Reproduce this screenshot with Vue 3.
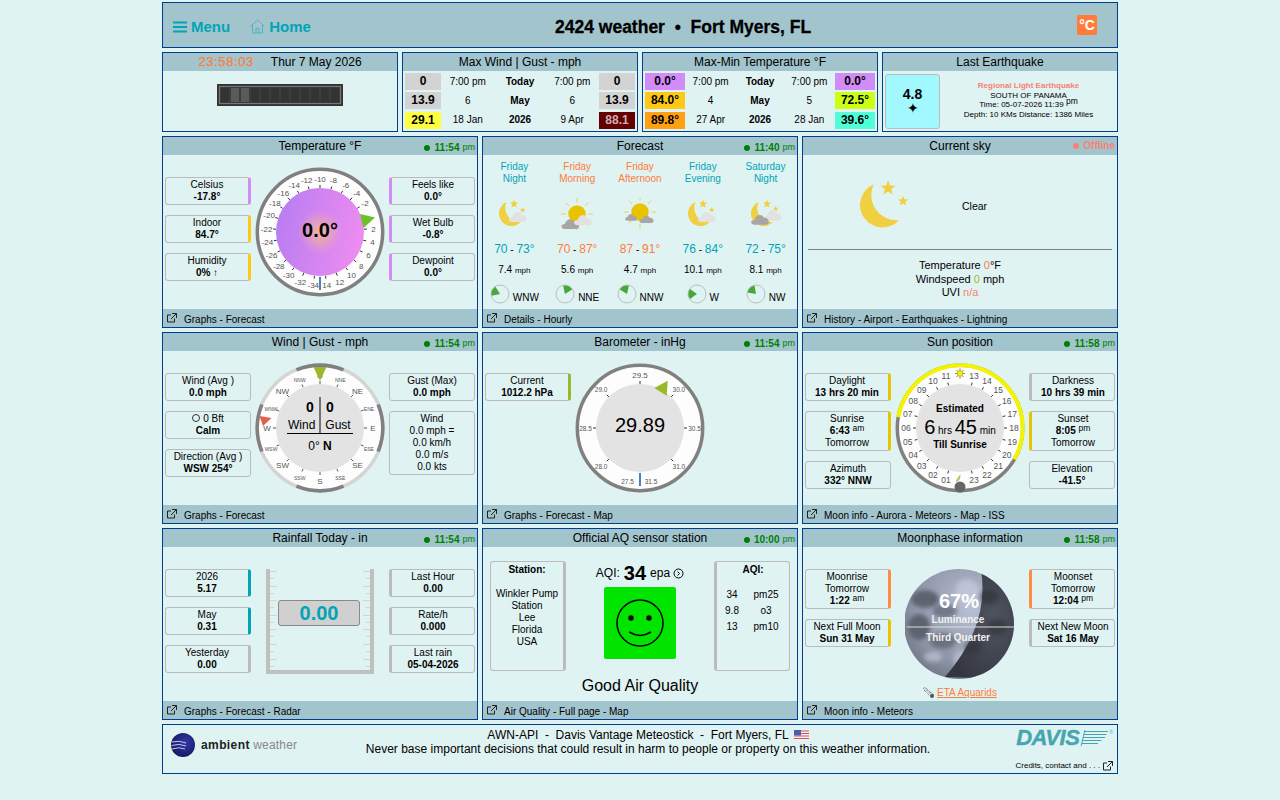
<template>
  <div class="page">
    <header class="top">
      <nav class="nav">
        <a class="nav-link">
          <svg width="14" height="12" viewBox="0 0 14 12"><path d="M0 1.5h14M0 6h14M0 10.5h14" stroke="#00a5b5" stroke-width="2" /></svg>
          Menu
        </a>
        <a class="nav-link home">
          <svg width="15" height="15" viewBox="0 0 15 15" fill="none" stroke="#4fb4c4" stroke-width="1"><path d="M.5 7.5 7.5 1l7 6.5M2.5 6v8h10V6M6 14V9.5h3V14" /></svg>
          Home
        </a>
      </nav>
      <h1 class="site-title">2424 weather &nbsp;•&nbsp; Fort Myers, FL</h1>
      <span class="unit-btn">°C</span>
    </header>

    <div class="row-small">
      <section class="card small">
        <div class="card-title"><span class="clock">23:58:03</span><span class="date">Thur 7 May 2026</span></div>
        <div class="led-wrap">
          <div class="led">
            <i v-for="i in 12" :key="i" :class="{ lit: i === 2 || i === 3 }"></i>
          </div>
        </div>
      </section>

      <section v-for="t in tables" :key="t.title" class="card small">
        <div class="card-title">{{ t.title }}</div>
        <div class="mini-table" :class="t.cls">
          <template v-for="r in t.rows" :key="r[2]">
            <b class="val" :class="r[5]">{{ r[0] }}</b>
            <span>{{ r[1] }}</span>
            <b class="mid">{{ r[2] }}</b>
            <span>{{ r[3] }}</span>
            <b class="val" :class="r[6]">{{ r[4] }}</b>
          </template>
        </div>
      </section>

      <section class="card small">
        <div class="card-title">Last Earthquake</div>
        <div class="quake">
          <div class="mag"><b>4.8</b><span>✦</span></div>
          <div class="quake-text">
            <b class="salmon">Regional Light Earthquake</b><br />
            SOUTH OF PANAMA<br />
            Time: 05-07-2026 11:39 <span class="up">pm</span><br />
            Depth: 10 KMs Distance: 1386 Miles
          </div>
        </div>
      </section>
    </div>

    <div class="row-main">
      <section v-for="c in cards" :key="c.title" class="card">
        <div class="card-title">
          {{ c.title }}
          <span v-if="c.stamp" class="stamp"><i class="dot"></i><b>{{ c.stamp }}</b> <small>pm</small></span>
          <span v-else class="stamp offline"><i class="dot"></i><b>Offline</b></span>
        </div>

        <!-- cards with info boxes down both sides -->
        <div v-if="c.left" class="card-body sides">
          <div class="col">
            <div v-for="(b, i) in c.left" :key="i" class="box on-right" :class="b.tone">
              <div v-for="(l, j) in b.lines" :key="j" :class="{ strong: l.b }">
                <i v-if="l.ring" class="ring"></i>{{ l.t }} <span v-if="l.sup" class="up">{{ l.sup }}</span>
              </div>
            </div>
          </div>

          <div class="center">
            <svg v-if="c.kind === 'temp'" class="gauge" width="130" height="130" viewBox="0 0 130 130">
              <defs>
                <linearGradient id="tempFill" x1="0" x2="1" y1="0.2" y2="0.4">
                  <stop offset="0" stop-color="#b77cf2" />
                  <stop offset="1" stop-color="#ec8cf0" />
                </linearGradient>
                <radialGradient id="tempGlow">
                  <stop offset="0" stop-color="#f5b890" stop-opacity="0.9" />
                  <stop offset="1" stop-color="#f5b890" stop-opacity="0" />
                </radialGradient>
              </defs>
              <circle cx="65" cy="65" r="62.7" fill="#fdfdfd" stroke="#808080" stroke-width="3.5" />
              <line v-for="t in tempMarks" :key="'k' + t.label" :x1="t.a.x" :y1="t.a.y" :x2="t.b.x" :y2="t.b.y" stroke="#333" />
              <text v-for="t in tempMarks" :key="t.label" :x="t.p.x" :y="t.p.y + 3" class="tick">{{ t.label }}</text>
              <circle cx="65" cy="65" r="44" fill="url(#tempFill)" />
              <circle cx="65" cy="65" r="22" fill="url(#tempGlow)" />
              <line x1="65" y1="110" x2="65" y2="123" stroke="#0d5aa0" stroke-width="1.5" />
              <polygon points="105,47 120,50.5 108.5,61" fill="#6cc028" />
              <text x="65" y="70" class="big bold">0.0°</text>
            </svg>

            <svg v-else-if="c.kind === 'wind'" class="gauge" width="130" height="130" viewBox="0 0 130 130">
              <circle cx="65" cy="65" r="62.7" fill="#fdfdfd" stroke="#d4d4d4" stroke-width="3.5" />
              <path v-for="a in [0, 90, 180, 270]" :key="a" :d="arc(a - 22, a + 22, 62.7)" fill="none" stroke="#808080" stroke-width="3.5" />
              <line v-for="d in compass" :key="'k' + d.label" :x1="d.a.x" :y1="d.a.y" :x2="d.b.x" :y2="d.b.y" stroke="#555" />
              <text v-for="d in compass" :key="d.label" :x="d.p.x" :y="d.p.y" class="tick" :class="{ tiny: d.minor }">{{ d.label }}</text>
              <circle cx="65" cy="65" r="44" fill="#e3e3e3" />
              <polygon points="58.5,4 71.5,4 65,18" fill="#9ab82a" />
              <polygon points="4.5,53 16.5,55 8,63" fill="#e2604c" />
              <text x="55" y="48.5" class="bold mid-num">0</text>
              <text x="75" y="48.5" class="bold mid-num">0</text>
              <text x="46.7" y="66.3" class="mid-text">Wind</text>
              <text x="83" y="66.3" class="mid-text">Gust</text>
              <line x1="65" y1="34" x2="65" y2="70.5" stroke="#000" />
              <line x1="32" y1="70.5" x2="98" y2="70.5" stroke="#000" />
              <text x="65" y="87" class="mid-text">0° <tspan class="bold">N</tspan></text>
            </svg>

            <svg v-else-if="c.kind === 'baro'" class="gauge" width="130" height="130" viewBox="0 0 130 130">
              <circle cx="65" cy="65" r="62.7" fill="#fdfdfd" stroke="#808080" stroke-width="3.5" />
              <line v-for="b in baroMarks" :key="'k' + b.label" :x1="b.a.x" :y1="b.a.y" :x2="b.b.x" :y2="b.b.y" stroke="#333" />
              <text v-for="b in baroMarks" :key="b.label" :x="b.p.x" :y="b.p.y" class="tick" :class="{ small6: !b.top }">{{ b.label }}</text>
              <circle cx="65" cy="65" r="44" fill="#e3e3e3" />
              <line x1="65" y1="110" x2="65" y2="123" stroke="#0d5aa0" stroke-width="1.5" />
              <text x="52.5" y="121" class="tick small6">27.5</text>
              <text x="76" y="121" class="tick small6">31.5</text>
              <polygon points="92.7,17.7 79.3,25 91.7,32.7" fill="#9ab82a" />
              <text x="65" y="69" class="big">29.89</text>
            </svg>

            <svg v-else-if="c.kind === 'sun'" class="gauge" width="130" height="130" viewBox="0 0 130 130">
              <circle cx="65" cy="65" r="62.7" fill="#fdfdfd" stroke="#808080" stroke-width="3.5" />
              <path :d="arc(-80, 120, 62.7)" fill="none" stroke="#f4f400" stroke-width="4" />
              <line v-for="h in hours" :key="'k' + h.label" :x1="h.a.x" :y1="h.a.y" :x2="h.b.x" :y2="h.b.y" stroke="#333" />
              <text v-for="h in hours" :key="h.label" :x="h.p.x" :y="h.p.y" class="tick sun-tick">{{ h.label }}</text>
              <circle cx="65" cy="65" r="44" fill="#e3e3e3" />
              <g stroke="#6b6b10" stroke-width="0.8">
                <path d="M65 5.5v10M60 10.5h10M61.5 7l7 7M68.5 7l-7 7" />
              </g>
              <circle cx="65" cy="10.5" r="2.8" fill="#f2f200" stroke="#a0a000" stroke-width="0.5" />
              <path d="M65 112.5c-2 2-3 4-3.5 6 2.5-1 3.5-3 3.5-6z" fill="#e8dc20" stroke="#666" stroke-width="0.4" />
              <circle cx="65" cy="124" r="5.5" fill="#666" />
              <text x="65" y="48.7" class="bold small10">Estimated</text>
              <text x="65" y="71" class="mid-text"><tspan class="big-inline">6</tspan><tspan class="small10"> hrs </tspan><tspan class="big-inline">45</tspan><tspan class="small10"> min</tspan></text>
              <text x="65" y="85" class="bold small10">Till Sunrise</text>
            </svg>

            <div v-else-if="c.kind === 'rain'" class="tube">
              <div class="rain-val">0.00</div>
            </div>

            <template v-else-if="c.kind === 'moon'">
              <svg width="110" height="110" viewBox="0 0 110 110">
                <defs>
                  <clipPath id="moonClip"><circle cx="54" cy="55" r="55" /></clipPath>
                  <radialGradient id="litFill" cx="0.6" cy="0.35" r="0.75">
                    <stop offset="0" stop-color="#b9c1d4" />
                    <stop offset="0.7" stop-color="#8d94a6" />
                    <stop offset="1" stop-color="#6b7180" />
                  </radialGradient>
                  <radialGradient id="darkFill" cx="0.7" cy="0.45" r="0.7">
                    <stop offset="0" stop-color="#50545f" />
                    <stop offset="1" stop-color="#33363f" />
                  </radialGradient>
                  <filter id="soft"><feGaussianBlur stdDeviation="2.2" /></filter>
                </defs>
                <g clip-path="url(#moonClip)">
                  <rect width="110" height="110" fill="url(#litFill)" />
                  <g filter="url(#soft)" fill="#5d636f">
                    <ellipse cx="20" cy="30" rx="14" ry="9" />
                    <ellipse cx="14" cy="58" rx="11" ry="13" />
                    <ellipse cx="40" cy="42" rx="12" ry="7" opacity="0.7" />
                    <ellipse cx="38" cy="72" rx="13" ry="8" opacity="0.75" />
                    <ellipse cx="28" cy="88" rx="9" ry="5" fill="#c9cfdd" opacity="0.6" />
                    <ellipse cx="62" cy="22" rx="12" ry="12" fill="#d4d9e6" opacity="0.45" />
                    <ellipse cx="58" cy="90" rx="10" ry="9" fill="#c4cada" opacity="0.6" />
                  </g>
                  <path d="M76 1Q85 56 40 108L110 110V0Z" fill="url(#darkFill)" />
                  <g filter="url(#soft)" fill="#2d3038" opacity="0.6">
                    <ellipse cx="84" cy="28" rx="9" ry="7" />
                    <ellipse cx="92" cy="58" rx="10" ry="8" />
                    <ellipse cx="68" cy="78" rx="8" ry="6" />
                  </g>
                </g>
                <text x="54" y="39" class="moon-pct">67%</text>
                <text x="53" y="53.5" class="moon-label">Luminance</text>
                <line x1="1.7" y1="58" x2="108.7" y2="58" stroke="#ddd" stroke-width="1.2" />
                <text x="53" y="72" class="moon-label">Third Quarter</text>
              </svg>
              <div class="meteor">
                <svg width="12" height="12" viewBox="0 0 12 12" fill="none" stroke="#777" stroke-dasharray="1 1">
                  <path d="M0 1 10 9M1 0l10 8M1 3l7 7M3 1l7 7" />
                  <circle cx="9" cy="9" r="2" fill="#555" stroke="none" />
                </svg>
                <a>ETA Aquarids</a>
              </div>
            </template>
          </div>

          <div class="col">
            <div v-for="(b, i) in c.right" :key="i" class="box on-left" :class="b.tone">
              <div v-for="(l, j) in b.lines" :key="j" :class="{ strong: l.b }">
                {{ l.t }} <span v-if="l.sup" class="up">{{ l.sup }}</span>
              </div>
            </div>
          </div>
        </div>

        <!-- forecast -->
        <div v-else-if="c.kind === 'forecast'" class="card-body forecast">
          <div v-for="f in forecast" :key="f.name + f.part" class="fc">
            <div class="fc-name" :class="f.warm ? 'orange' : 'teal'">{{ f.name }}<br />{{ f.part }}</div>
            <svg class="fc-icon" width="40" height="33" viewBox="0 0 40 33">
              <g v-if="f.icon === 'moon' || f.icon === 'moonClouds'">
                <path :d="crescent" fill="#f0d040" />
                <polygon :points="star(f.icon === 'moon' ? 20 : 21, 6, 4.5)" fill="#f0d040" />
                <polygon :points="star(f.icon === 'moon' ? 28.7 : 29.7, f.icon === 'moon' ? 12 : 10.7, 3)" fill="#f0d040" />
                <path v-if="f.icon === 'moon'" :d="cloud" :transform="place(14.7, 12.7, 18.3, 11.3)" fill="#e2e2e2" />
                <template v-else>
                  <path :d="cloud" :transform="place(17.7, 10.7, 18.3, 12)" fill="#e2e2e2" />
                  <path :d="cloud" :transform="place(5, 15.7, 18.3, 11)" fill="#aaa5a5" />
                </template>
              </g>
              <g v-else-if="f.icon === 'sunCloud'">
                <path :d="rays(20, 16)" stroke="#f0d040" stroke-width="1" />
                <circle cx="20" cy="16" r="8.7" fill="#e8c400" />
                <path :d="cloud" :transform="place(4.3, 20, 18.4, 11)" fill="#aaa5a5" />
                <path :d="cloud" :transform="place(17, 15.7, 18.3, 11.6)" fill="#e2e2e2" />
              </g>
              <g v-else>
                <path :d="rays(20, 14)" stroke="#f0d040" stroke-width="1" />
                <circle cx="20" cy="14" r="8.7" fill="#e8c400" />
                <path :d="cloud" :transform="place(5, 15, 12.3, 7.7)" fill="#aaa5a5" />
                <path :d="cloud" :transform="place(19.3, 16.7, 14.7, 8.3)" fill="#aaa5a5" />
              </g>
            </svg>
            <div class="fc-temp" :class="f.warm ? 'orange' : 'teal'">
              <span>{{ f.lo }}</span><small> - </small><span>{{ f.hi }}°</span>
            </div>
            <div class="fc-speed">{{ f.speed }} <small>mph</small></div>
            <div class="fc-dir">
              <svg width="20" height="20" viewBox="0 0 20 20">
                <circle cx="10" cy="10" r="9" fill="none" stroke="#bdbdbd" />
                <path :d="wedge(f.deg)" fill="#45a838" />
              </svg>
              <span>{{ f.dir }}</span>
            </div>
          </div>
        </div>

        <!-- current sky -->
        <div v-else-if="c.kind === 'sky'" class="card-body sky">
          <div class="sky-top">
            <svg class="sky-icon" width="54" height="50.4" viewBox="0 0 30 28">
              <path :d="crescent" fill="#f0d040" transform="translate(-5 0)" />
              <polygon :points="star(15.6, 6.2, 4.4)" fill="#f0d040" />
              <polygon :points="star(23.9, 13.4, 3)" fill="#f0d040" />
            </svg>
            <span>Clear</span>
          </div>
          <div class="sky-text">
            Temperature <span class="orange">0</span>°F<br />
            Windspeed <span class="olive">0</span> mph<br />
            UVI <span class="salmon">n/a</span>
          </div>
        </div>

        <!-- air quality -->
        <div v-else class="card-body aq">
          <div class="aq-box accent-r">
            <b>Station:</b>
            <p>Winkler Pump<br />Station<br />Lee<br />Florida<br />USA</p>
          </div>
          <div class="aq-mid">
            <div class="aq-head">
              AQI: <b>34</b> epa
              <svg width="11" height="11" viewBox="0 0 11 11" fill="none" stroke="#000"><circle cx="5.5" cy="5.5" r="4.5" /><path d="M4.5 3.5 6.5 5.5 4.5 7.5" /></svg>
            </div>
            <div class="aq-face">
              <svg width="72" height="72" viewBox="0 0 72 72" fill="none" stroke="#000" stroke-width="1.5">
                <circle cx="36" cy="36" r="23" />
                <circle cx="27" cy="31" r="2.7" fill="#000" stroke="none" />
                <circle cx="45" cy="31" r="2.7" fill="#000" stroke="none" />
                <path d="M25.3 45Q36 52 47 45" />
              </svg>
            </div>
            <div class="aq-label">Good Air Quality</div>
          </div>
          <div class="aq-box accent-l">
            <b>AQI:</b>
            <div class="aq-grid">
              <template v-for="p in pollutants" :key="p[1]">
                <span>{{ p[0] }}</span><span>{{ p[1] }}</span>
              </template>
            </div>
          </div>
        </div>

        <div class="card-foot">
          <svg width="10" height="10" viewBox="0 0 10 10" fill="none" stroke="#222"><path d="M7.5 5.5V9h-7V2H4M5 .5h4.5V5M9.5 .5 4 6" /></svg>
          <span>{{ c.links }}</span>
        </div>
      </section>
    </div>

    <footer class="foot">
      <div class="ambient">
        <svg width="24" height="24" viewBox="0 0 24 24">
          <defs>
            <radialGradient id="ball" cx="0.6" cy="0.4" r="0.7">
              <stop offset="0" stop-color="#3438a8" />
              <stop offset="1" stop-color="#12145a" />
            </radialGradient>
          </defs>
          <circle cx="12" cy="12" r="12" fill="url(#ball)" />
          <path d="M1 9Q8 7 15 10M.5 12.5Q8 10 15 13M1 16Q8 13.5 14 16" fill="none" stroke="#c4cbe4" stroke-width="1" />
        </svg>
        <span class="ambient-name"><b>ambient</b> <i>weather</i></span>
      </div>
      <div class="foot-text">
        AWN-API &nbsp;-&nbsp; Davis Vantage Meteostick &nbsp;-&nbsp; Fort Myers, FL
        <svg class="flag" width="15" height="10" viewBox="0 0 15 10">
          <rect width="15" height="10" fill="#f4f4f4" />
          <path d="M0 1h15M0 3.5h15M0 6h15M0 8.5h15" stroke="#d2505a" stroke-width="1.2" />
          <rect width="7" height="5.5" fill="#4a5fa8" />
        </svg>
        <br />
        Never base important decisions that could result in harm to people or property on this weather information.
      </div>
      <div class="foot-right">
        <div class="davis">
          <span>DAVIS</span>
          <svg width="28" height="16" viewBox="0 0 28 16" fill="none" stroke="#45a5b0" stroke-width="1">
            <path d="M4 1.5h24M3.5 4.5h23M3 7.5h22M2.5 10.5h19M2 13.5h16" />
            <path d="M5 0 1 16" />
          </svg>
          <sup>®</sup>
        </div>
        <div class="credits">
          Credits, contact and . . .
          <svg width="10" height="10" viewBox="0 0 10 10" fill="none" stroke="#222"><path d="M7.5 5.5V9h-7V2H4M5 .5h4.5V5M9.5 .5 4 6" /></svg>
        </div>
      </div>
    </footer>
  </div>
</template>

<script setup>
// helpers for the round gauges
const polar = (deg, r) => {
  const a = (deg * Math.PI) / 180;
  return { x: +(65 + r * Math.sin(a)).toFixed(2), y: +(65 - r * Math.cos(a)).toFixed(2) };
};
const arc = (from, to, r) => {
  const s = polar(from, r);
  const e = polar(to, r);
  return `M${s.x} ${s.y}A${r} ${r} 0 ${to - from > 180 ? 1 : 0} 1 ${e.x} ${e.y}`;
};
const star = (cx, cy, r) => {
  const pts = [];
  for (let i = 0; i < 10; i++) {
    const rad = i % 2 ? r * 0.42 : r;
    const a = (i * 36 * Math.PI) / 180;
    pts.push(`${(cx + rad * Math.sin(a)).toFixed(2)},${(cy - rad * Math.cos(a)).toFixed(2)}`);
  }
  return pts.join(" ");
};
const rays = (cx, cy) => {
  let d = "";
  for (let a = 0; a < 360; a += 45) {
    const t = (a * Math.PI) / 180;
    d += `M${(cx + 11.5 * Math.sin(t)).toFixed(1)} ${(cy - 11.5 * Math.cos(t)).toFixed(1)}L${(cx + 16 * Math.sin(t)).toFixed(1)} ${(cy - 16 * Math.cos(t)).toFixed(1)}`;
  }
  return d;
};
const wedge = (deg) => {
  const t = (d) => {
    const a = (d * Math.PI) / 180;
    return `${(10 + 8.5 * Math.sin(a)).toFixed(2)} ${(10 - 8.5 * Math.cos(a)).toFixed(2)}`;
  };
  return `M10 10L${t(deg - 35)}A8.5 8.5 0 0 1 ${t(deg + 35)}Z`;
};

const crescent = "M12.7 4A12.5 12.5 0 1 0 26.7 24A14 14 0 0 1 12.7 4Z";
const cloud = "M.2 1C-.05 1-.05.55.2.55C.24.15.58-.1.72.38C1 .35 1.08 1 .8 1Z";
const place = (x, y, w, h) => `translate(${x} ${y}) scale(${w} ${h})`;

const ring = (deg, labelR) => ({ a: polar(deg, 44), b: polar(deg, 47), p: polar(deg, labelR) });

const tempMarks = [];
for (let i = 0; i < 25; i++) {
  const v = -34 + i * 2;
  if (v === 0) continue;
  const deg = ((v + 10) * 7.2 + 360) % 360;
  tempMarks.push({ label: v, ...ring(deg, 53.5) });
}

const compass = "N,NNE,NE,ENE,E,ESE,SE,SSE,S,SSW,SW,WSW,W,WNW,NW,NNW".split(",").map((label, i) => {
  const m = ring(i * 22.5, 53);
  return { label, minor: i % 2 === 1, ...m, p: { x: m.p.x, y: m.p.y + 3 } };
});

const baroMarks = [
  ["29.5", 0], ["30.0", 45], ["30.5", 90], ["31.0", 135], ["28.0", 225], ["28.5", 270], ["29.0", 315],
].map(([label, deg]) => {
  const m = ring(deg, deg === 0 ? 53 : deg % 90 ? 55 : 54.5);
  return { label, top: deg === 0, ...m, p: { x: m.p.x, y: m.p.y + 2.5 } };
});

const hours = [];
for (let h = 1; h < 24; h++) {
  if (h === 12) continue;
  const m = ring(((h + 12) % 24) * 15, 54);
  hours.push({ label: String(h).padStart(2, "0"), ...m, p: { x: m.p.x, y: m.p.y + 3 } });
}

const tables = [
  {
    title: "Max Wind | Gust - mph",
    cls: "wind-table",
    rows: [
      ["0", "7:00 pm", "Today", "7:00 pm", "0", "v-gray", "v-gray"],
      ["13.9", "6", "May", "6", "13.9", "v-gray", "v-gray"],
      ["29.1", "18 Jan", "2026", "9 Apr", "88.1", "v-yellow", "v-maroon"],
    ],
  },
  {
    title: "Max-Min Temperature °F",
    cls: "temp-table",
    rows: [
      ["0.0°", "7:00 pm", "Today", "7:00 pm", "0.0°", "v-purple", "v-purple"],
      ["84.0°", "4", "May", "5", "72.5°", "v-amber", "v-lime"],
      ["89.8°", "27 Apr", "2026", "28 Jan", "39.6°", "v-orange", "v-aqua"],
    ],
  },
];

const n = (t) => ({ t });
const v = (t, sup) => ({ t, sup, b: true });
const box = (tone, ...lines) => ({ tone, lines });

const cards = [
  {
    title: "Temperature °F", stamp: "11:54", kind: "temp", links: "Graphs - Forecast",
    left: [
      box("purple", n("Celsius"), v("-17.8°")),
      box("amber", n("Indoor"), v("84.7°")),
      box("amber", n("Humidity"), v("0% ↑")),
    ],
    right: [
      box("purple", n("Feels like"), v("0.0°")),
      box("purple", n("Wet Bulb"), v("-0.8°")),
      box("purple", n("Dewpoint"), v("0.0°")),
    ],
  },
  { title: "Forecast", stamp: "11:40", kind: "forecast", links: "Details - Hourly" },
  { title: "Current sky", stamp: "", kind: "sky", links: "History - Airport - Earthquakes - Lightning" },
  {
    title: "Wind | Gust - mph", stamp: "11:54", kind: "wind", links: "Graphs - Forecast",
    left: [
      box("plain", n("Wind (Avg )"), v("0.0 mph")),
      box("plain", { t: "0 Bft", ring: true }, v("Calm")),
      box("plain", n("Direction (Avg )"), v("WSW 254°")),
    ],
    right: [
      box("plain", n("Gust (Max)"), v("0.0 mph")),
      box("plain", n("Wind"), n("0.0 mph ="), n("0.0 km/h"), n("0.0 m/s"), n("0.0 kts")),
    ],
  },
  {
    title: "Barometer - inHg", stamp: "11:54", kind: "baro", links: "Graphs - Forecast - Map",
    left: [box("olive-b", n("Current"), v("1012.2 hPa"))],
    right: [],
  },
  {
    title: "Sun position", stamp: "11:58", kind: "sun", links: "Moon info - Aurora - Meteors - Map - ISS",
    left: [
      box("gold", n("Daylight"), v("13 hrs 20 min")),
      box("gold", n("Sunrise"), v("6:43", "am"), n("Tomorrow")),
      box("plain", n("Azimuth"), v("332° NNW")),
    ],
    right: [
      box("gray", n("Darkness"), v("10 hrs 39 min")),
      box("gold", n("Sunset"), v("8:05", "pm"), n("Tomorrow")),
      box("plain", n("Elevation"), v("-41.5°")),
    ],
  },
  {
    title: "Rainfall Today - in", stamp: "11:54", kind: "rain", links: "Graphs - Forecast - Radar",
    left: [
      box("teal-b", n("2026"), v("5.17")),
      box("teal-b", n("May"), v("0.31")),
      box("gray", n("Yesterday"), v("0.00")),
    ],
    right: [
      box("gray", n("Last Hour"), v("0.00")),
      box("gray", n("Rate/h"), v("0.000")),
      box("gray", n("Last rain"), v("05-04-2026")),
    ],
  },
  { title: "Official AQ sensor station", stamp: "10:00", kind: "aq", links: "Air Quality - Full page - Map" },
  {
    title: "Moonphase information", stamp: "11:58", kind: "moon", links: "Moon info - Meteors",
    left: [
      box("orange-b", n("Moonrise"), n("Tomorrow"), v("1:22", "am")),
      box("gold", n("Next Full Moon"), v("Sun 31 May")),
    ],
    right: [
      box("orange-b", n("Moonset"), n("Tomorrow"), v("12:04", "pm")),
      box("gray", n("Next New Moon"), v("Sat 16 May")),
    ],
  },
];

const forecast = [
  { name: "Friday", part: "Night", icon: "moon", lo: 70, hi: 73, speed: "7.4", dir: "WNW", deg: 292.5 },
  { name: "Friday", part: "Morning", warm: true, icon: "sunCloud", lo: 70, hi: 87, speed: "5.6", dir: "NNE", deg: 22.5 },
  { name: "Friday", part: "Afternoon", warm: true, icon: "sunClouds", lo: 87, hi: 91, speed: "4.7", dir: "NNW", deg: 337.5 },
  { name: "Friday", part: "Evening", icon: "moon", lo: 76, hi: 84, speed: "10.1", dir: "W", deg: 270 },
  { name: "Saturday", part: "Night", icon: "moonClouds", lo: 72, hi: 75, speed: "8.1", dir: "NW", deg: 315 },
];

const pollutants = [
  ["34", "pm25"],
  ["9.8", "o3"],
  ["13", "pm10"],
];
</script>

<style scoped>
.page {
  width: 956px;
  margin: 0 auto;
  padding-top: 2px;
  display: flex;
  flex-direction: column;
  gap: 4px;
  color: #000;
  font-family: "Liberation Sans", Arial, sans-serif;
  font-size: 10px;
  line-height: 12px;
}

.top {
  height: 46px;
  box-sizing: border-box;
  border: 1px solid #003f8f;
  background: #a2c4cd;
  display: flex;
  align-items: center;
  padding-top: 3px;
}
.nav {
  width: 392px;
  display: flex;
  padding-left: 10px;
  box-sizing: border-box;
}
.nav-link {
  display: flex;
  align-items: center;
  gap: 4px;
  color: #00a5b5;
  font-size: 15px;
  font-weight: bold;
}
.home {
  margin-left: 20px;
}
.site-title {
  margin: 0;
  font-size: 17.5px;
  line-height: 20px;
  font-weight: bold;
  -webkit-text-stroke: 0.3px #000;
}
.unit-btn {
  margin-left: auto;
  margin-right: 20px;
  margin-top: -3px;
  width: 20px;
  height: 20px;
  border-radius: 2px;
  background: #ff7c39;
  color: #fff;
  font-size: 14px;
  line-height: 20px;
  font-weight: bold;
  text-align: center;
}

.row-small {
  display: grid;
  grid-template-columns: repeat(4, 236px);
  gap: 4px;
}
.row-main {
  display: grid;
  grid-template-columns: repeat(3, 316px);
  grid-auto-rows: 192px;
  gap: 4px;
}

.card {
  position: relative;
  box-sizing: border-box;
  border: 1px solid #003f8f;
  display: flex;
  flex-direction: column;
}
.card.small {
  height: 80px;
}
.card-title {
  position: relative;
  height: 18px;
  flex: none;
  background: #a2c4cd;
  font-size: 12px;
  line-height: 18px;
  text-align: center;
}
.card-foot {
  height: 18px;
  flex: none;
  background: #a2c4cd;
  display: flex;
  align-items: center;
  gap: 7px;
  padding-left: 4px;
}
.card-foot span {
  margin-top: 4px;
}
.card-body {
  flex: 1;
  min-height: 0;
}

.stamp {
  position: absolute;
  right: 2px;
  top: 4px;
  color: #008000;
  font-size: 10px;
  line-height: 14px;
  display: flex;
  align-items: center;
}
.stamp small {
  font-size: 9px;
  margin-left: 3px;
  margin-top: -3px;
}
.dot {
  width: 6px;
  height: 6px;
  border-radius: 50%;
  background: #008000;
  margin-right: 4px;
}
.offline {
  color: #fa8072;
  top: 2px;
}
.offline .dot {
  background: #fa8072;
}

.clock {
  color: #ff7c39;
  font-size: 13px;
  letter-spacing: 0.6px;
  -webkit-text-stroke: 0.2px #ff7c39;
}
.date {
  margin-left: 17px;
}
.led-wrap {
  flex: 1;
  display: flex;
  align-items: center;
  justify-content: center;
  padding-bottom: 13px;
}
.led {
  width: 126px;
  height: 22px;
  box-sizing: border-box;
  background: #3c3c3c;
  border: 1px solid #333;
  outline: 1px solid #777;
  outline-offset: -3px;
  display: flex;
  gap: 2px;
  padding: 3px 3px;
}
.led i {
  width: 8px;
  background: #333;
}
.led i.lit {
  background: #5a5a5a;
}

.mini-table {
  flex: 1;
  display: grid;
  grid-template-rows: repeat(3, 1fr);
  gap: 2px 0;
  padding: 2px;
  justify-content: space-between;
  align-items: center;
  text-align: center;
}
.wind-table {
  grid-template-columns: 36px 51px 51px 51px 36px;
}
.temp-table {
  grid-template-columns: 40px 47.5px 47.5px 47.5px 40px;
}
.val {
  font-size: 12px;
  line-height: 17px;
  height: 17px;
}
.mid {
  font-weight: bold;
}
.v-gray { background: #d3d3d3; }
.v-yellow { background: #ffff40; }
.v-maroon { background: #660000; color: #c8b0b0; }
.v-purple { background: #d28cf8; }
.v-amber { background: #ffc814; }
.v-orange { background: #ffa010; }
.v-lime { background: #ccff14; }
.v-aqua { background: #50ffd8; }

.quake {
  flex: 1;
  display: flex;
  align-items: center;
  padding-left: 2px;
}
.mag {
  width: 55px;
  height: 55px;
  box-sizing: border-box;
  background: #a2f8ff;
  border: 1px solid #bbb;
  border-radius: 3px;
  display: flex;
  flex-direction: column;
  align-items: center;
  justify-content: center;
  font-size: 14px;
  line-height: 14px;
}
.quake-text {
  flex: 1;
  text-align: center;
  font-size: 8px;
  line-height: 9.5px;
  padding-bottom: 2px;
}
.salmon {
  color: #fa8072;
}
.orange {
  color: #ff7c39;
}
.teal {
  color: #00a5b5;
}
.olive {
  color: #9ab82a;
}
.up {
  font-size: 8.5px;
  line-height: 0;
  vertical-align: 3px;
  font-weight: normal;
}

.sides {
  display: grid;
  grid-template-columns: 86px 1fr 86px;
  padding: 22px 2px 0;
  align-items: start;
}
.col {
  display: flex;
  flex-direction: column;
  gap: 10px;
}
.box {
  box-sizing: border-box;
  border: 1px solid #bbb;
  border-radius: 3px;
  padding: 1px 0;
  text-align: center;
}
.strong {
  font-weight: bold;
}
.ring {
  display: inline-block;
  width: 6px;
  height: 6px;
  border: 1.5px solid #333;
  border-radius: 50%;
  margin-right: 3px;
  vertical-align: 0;
}
.on-right { border-right-width: 3px; }
.on-left { border-left-width: 3px; }
.on-right.plain, .on-left.plain { border-width: 1px; }
.on-right.purple { border-right-color: #d28cf8; }
.on-left.purple { border-left-color: #d28cf8; }
.on-right.amber { border-right-color: #ffc814; }
.on-right.gold { border-right-color: #e8c400; }
.on-left.gold { border-left-color: #e8c400; }
.on-right.gray { border-right-color: #bbb; }
.on-left.gray { border-left-color: #bbb; }
.on-right.teal-b { border-right-color: #00a5b5; }
.on-right.orange-b { border-right-color: #ff8a40; }
.on-left.orange-b { border-left-color: #ff8a40; }
.on-right.olive-b { border-right-color: #9ab82a; }

.center {
  display: flex;
  flex-direction: column;
  align-items: center;
}
.gauge {
  margin-top: -10px;
  display: block;
}
.tick {
  font-size: 8px;
  fill: #555;
  text-anchor: middle;
}
.tiny { font-size: 5px; }
.small6 { font-size: 6.5px; }
.sun-tick { font-size: 8.5px; }
.bold { font-weight: bold; }
.big { font-size: 20px; text-anchor: middle; fill: #000; }
.big-inline { font-size: 20px; }
.mid-num { font-size: 14px; text-anchor: middle; }
.mid-text { font-size: 12px; text-anchor: middle; }
.small10 { font-size: 10px; text-anchor: middle; }

.tube {
  width: 108px;
  height: 105px;
  box-sizing: border-box;
  border: solid #c0c0c0;
  border-width: 0 4px 4px;
  padding: 0 2px 13px 0;
  display: flex;
  align-items: center;
  justify-content: center;
  background:
    repeating-linear-gradient(#d0d6d6 0 1px, transparent 1px 14.6px) left 0 top 2px / 7px 100% no-repeat,
    repeating-linear-gradient(#d0d6d6 0 1px, transparent 1px 14.6px) right 0 top 2px / 7px 100% no-repeat,
    repeating-linear-gradient(#d0d6d6 0 1px, transparent 1px 14.6px) left 0 top 9px / 4px 100% no-repeat,
    repeating-linear-gradient(#d0d6d6 0 1px, transparent 1px 14.6px) right 0 top 9px / 4px 100% no-repeat;
}
.rain-val {
  width: 82px;
  height: 26px;
  box-sizing: border-box;
  background: #d0d0d0;
  border: 1px solid #888;
  border-radius: 3px;
  color: #00a5b5;
  font-size: 20px;
  font-weight: bold;
  line-height: 24px;
  text-align: center;
}

.moon-pct {
  font-size: 20px;
  font-weight: bold;
  fill: #fff;
  text-anchor: middle;
}
.moon-label {
  font-size: 10px;
  font-weight: bold;
  fill: #f2f2f2;
  text-anchor: middle;
}
.meteor {
  display: flex;
  align-items: center;
  gap: 2px;
  margin-top: 8px;
}
.meteor a {
  color: #ff7c39;
  text-decoration: underline;
}

.forecast {
  display: grid;
  grid-template-columns: repeat(5, 1fr);
  padding-top: 6px;
}
.fc {
  display: flex;
  flex-direction: column;
  align-items: center;
  text-align: center;
}
.fc-icon {
  display: block;
  margin-top: 13px;
}
.fc-temp {
  font-size: 12px;
  line-height: 14px;
  margin-top: 11px;
}
.fc-temp small {
  font-size: 10px;
  color: #000;
}
.fc-speed {
  margin-top: 7px;
}
.fc-speed small {
  font-size: 8px;
}
.fc-dir {
  display: flex;
  align-items: center;
  gap: 3px;
  margin-top: 7px;
}
.fc-dir span {
  margin-top: 8px;
}

.sky {
  display: flex;
  flex-direction: column;
}
.sky-top {
  height: 95px;
  flex: none;
  margin: 0 5px;
  border-bottom: 1px solid #808080;
  box-sizing: border-box;
  display: flex;
  align-items: center;
  padding-left: 52px;
  font-size: 10.5px;
}
.sky-icon {
  overflow: visible;
}
.sky-top span {
  margin: 8px 0 0 48px;
}
.sky-text {
  text-align: center;
  font-size: 11px;
  line-height: 13.5px;
  margin-top: 9px;
}

.aq {
  display: grid;
  grid-template-columns: 76px 1fr 76px;
  padding: 14px 7px 0;
  align-items: start;
}
.aq-box {
  height: 110px;
  box-sizing: border-box;
  border: 1px solid #bbb;
  border-radius: 3px;
  text-align: center;
  padding-top: 2px;
}
.aq-box p {
  margin: 12px 0 0;
}
.accent-r { border-right-width: 3px; }
.accent-l { border-left-width: 3px; }
.aq-grid {
  display: grid;
  grid-template-columns: 34px 34px;
  justify-content: center;
  row-gap: 4px;
  margin: 13px 8px 0 0;
}
.aq-mid {
  display: flex;
  flex-direction: column;
  align-items: center;
}
.aq-head {
  height: 24px;
  display: flex;
  align-items: center;
  gap: 3px;
  font-size: 12px;
}
.aq-head b {
  font-size: 20px;
  margin: 0 1px;
}
.aq-face {
  width: 72px;
  height: 72px;
  margin-top: 2px;
  background: #00e400;
  border-radius: 2px;
}
.aq-label {
  margin-top: 18px;
  font-size: 16px;
  line-height: 18px;
}

.foot {
  height: 50px;
  box-sizing: border-box;
  border: 1px solid #003f8f;
  display: grid;
  grid-template-columns: 200px 1fr 184px;
}
.ambient {
  display: flex;
  align-items: flex-start;
  gap: 6px;
  padding: 8px 0 0 8px;
}
.ambient-name {
  font-size: 12px;
  line-height: 24px;
  color: #222;
  white-space: nowrap;
}
.ambient-name b {
  letter-spacing: 0.4px;
}
.ambient-name i {
  font-style: normal;
  color: #888;
  letter-spacing: 0.2px;
}
.foot-text {
  font-size: 12px;
  line-height: 14px;
  text-align: center;
  padding-top: 3px;
  white-space: nowrap;
}
.flag {
  vertical-align: -1px;
  margin-left: 2px;
}
.foot-right {
  display: flex;
  flex-direction: column;
  align-items: flex-end;
  padding: 2px 4px 0 0;
}
.davis {
  display: flex;
  align-items: center;
  gap: 1px;
  height: 22px;
  color: #45a5b0;
  font-size: 22px;
  font-weight: bold;
  font-style: italic;
  letter-spacing: -0.5px;
  -webkit-text-stroke: 0.4px #45a5b0;
}
.davis sup {
  font-size: 5px;
  font-style: normal;
  font-weight: normal;
  letter-spacing: 0;
  line-height: 5px;
  margin-bottom: 12px;
  -webkit-text-stroke: 0;
}
.credits {
  display: flex;
  align-items: center;
  gap: 3px;
  margin-top: 11px;
  font-size: 8px;
}
</style>

<style>
html,
body {
  background: #e0f3f3;
}
</style>
